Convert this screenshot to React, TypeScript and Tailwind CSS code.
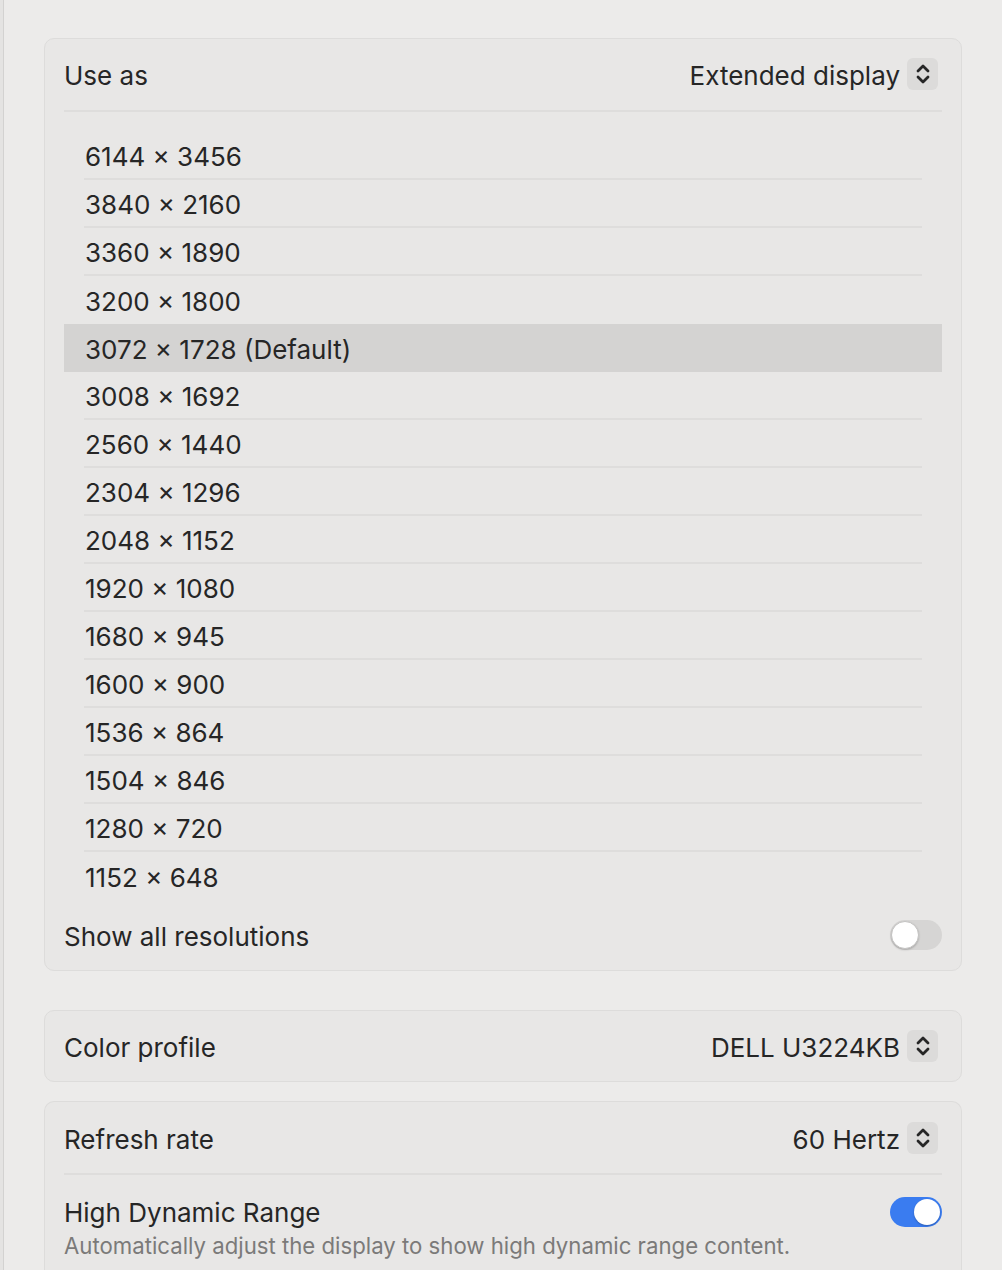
import React from 'react';

const RESOLUTIONS = [
  '6144 × 3456',
  '3840 × 2160',
  '3360 × 1890',
  '3200 × 1800',
  '3072 × 1728 (Default)',
  '3008 × 1692',
  '2560 × 1440',
  '2304 × 1296',
  '2048 × 1152',
  '1920 × 1080',
  '1680 × 945',
  '1600 × 900',
  '1536 × 864',
  '1504 × 846',
  '1280 × 720',
  '1152 × 648',
];

function Stepper() {
  return (
    <div className="w-[31px] h-[32px] rounded-[6px] bg-[#dcdbda] flex items-center justify-center ml-[7px] -mt-[3px]">
      <svg width="16" height="24" viewBox="0 0 16 24" fill="none" stroke="#262626" strokeWidth="2.8" strokeLinecap="round" strokeLinejoin="round">
        <path d="M3 9 L8 4 L13 9" />
        <path d="M3 15 L8 20 L13 15" />
      </svg>
    </div>
  );
}

function Toggle({ on }: { on: boolean }) {
  return on ? (
    <div className="w-[52px] h-[30px] rounded-full bg-[#3a7cf0] flex items-center justify-end px-[2px]">
      <div className="w-[26px] h-[26px] rounded-full bg-white shadow-[0_1px_2px_rgba(0,0,0,0.25)]" />
    </div>
  ) : (
    <div className="w-[52px] h-[30px] rounded-full bg-[#d6d5d4] flex items-center px-[1px]">
      <div className="w-[28px] h-[28px] rounded-full bg-white border border-[#c4c3c2] shadow-[0_1px_2px_rgba(0,0,0,0.2)]" />
    </div>
  );
}

export default function App() {
  return (
    <div
      className="flex min-h-[1270px] w-[1002px] bg-[#ecebea] text-[#262626] text-[26px] overflow-hidden"
      style={{ fontFamily: 'Inter, "Noto Sans", sans-serif' }}
    >
      <div className="w-[3px] bg-[#e4e3e2]" />
      <div className="w-px bg-[#d3d2d1]" />
      <div className="flex-1 flex flex-col pl-[40px] pr-[40px] pt-[38px] gap-[20px]">
        {/* Resolution panel */}
        <div className="rounded-[10px] border border-[#dddcdb] bg-[#e8e7e6] px-[19px]">
          <div className="flex items-center justify-between h-[73px] pt-[2px] border-b-2 border-[#dedddc]">
            <span>Use as</span>
            <div className="flex items-center mr-[4px]">
              <span>Extended display</span>
              <Stepper />
            </div>
          </div>
          <div className="pt-[20px] pb-[4px]">
            {RESOLUTIONS.map((r, i) => {
              const active = r.includes('Default');
              const last = i === RESOLUTIONS.length - 1;
              const nextActive = RESOLUTIONS[i + 1]?.includes('Default');
              return (
                <div key={r} className={active ? 'bg-[#d4d3d2] h-[48px] flex items-center pt-[3px] pl-[21px]' : 'px-[20px] h-[48px]'}>
                  {active ? (
                    <span>{r}</span>
                  ) : (
                    <div className={`h-full flex items-center pt-[3px] pl-px ${last || nextActive ? '' : 'border-b-2 border-[#dedddc]'}`}>
                      <span>{r}</span>
                    </div>
                  )}
                </div>
              );
            })}
          </div>
          <div className="flex items-center justify-between h-[66px] pb-[4px]">
            <span className="pt-[2px]">Show all resolutions</span>
            <Toggle on={false} />
          </div>
        </div>

        {/* Color profile */}
        <div className="mt-[19px] rounded-[10px] border border-[#dddcdb] bg-[#e8e7e6] px-[19px]">
          <div className="flex items-center justify-between h-[70px] pt-[2px]">
            <span>Color profile</span>
            <div className="flex items-center mr-[4px]">
              <span>DELL U3224KB</span>
              <Stepper />
            </div>
          </div>
        </div>

        {/* Refresh / HDR */}
        <div className="-mt-[1px] rounded-t-[10px] border border-b-0 border-[#dddcdb] bg-[#e8e7e6] px-[19px] flex-1">
          <div className="flex items-center justify-between h-[73px] pt-[3px] border-b-2 border-[#dedddc]">
            <span>Refresh rate</span>
            <div className="flex items-center mr-[4px]">
              <span>60 Hertz</span>
              <Stepper />
            </div>
          </div>
          <div className="flex items-start justify-between pt-[20px]">
            <div className="flex flex-col">
              <span className="leading-[36px]">High Dynamic Range</span>
              <span className="text-[22.2px] text-[#7b7a79] leading-[30px]">
                Automatically adjust the display to show high dynamic range content.
              </span>
            </div>
            <div className="mt-[2px]">
              <Toggle on={true} />
            </div>
          </div>
        </div>
      </div>
    </div>
  );
}
